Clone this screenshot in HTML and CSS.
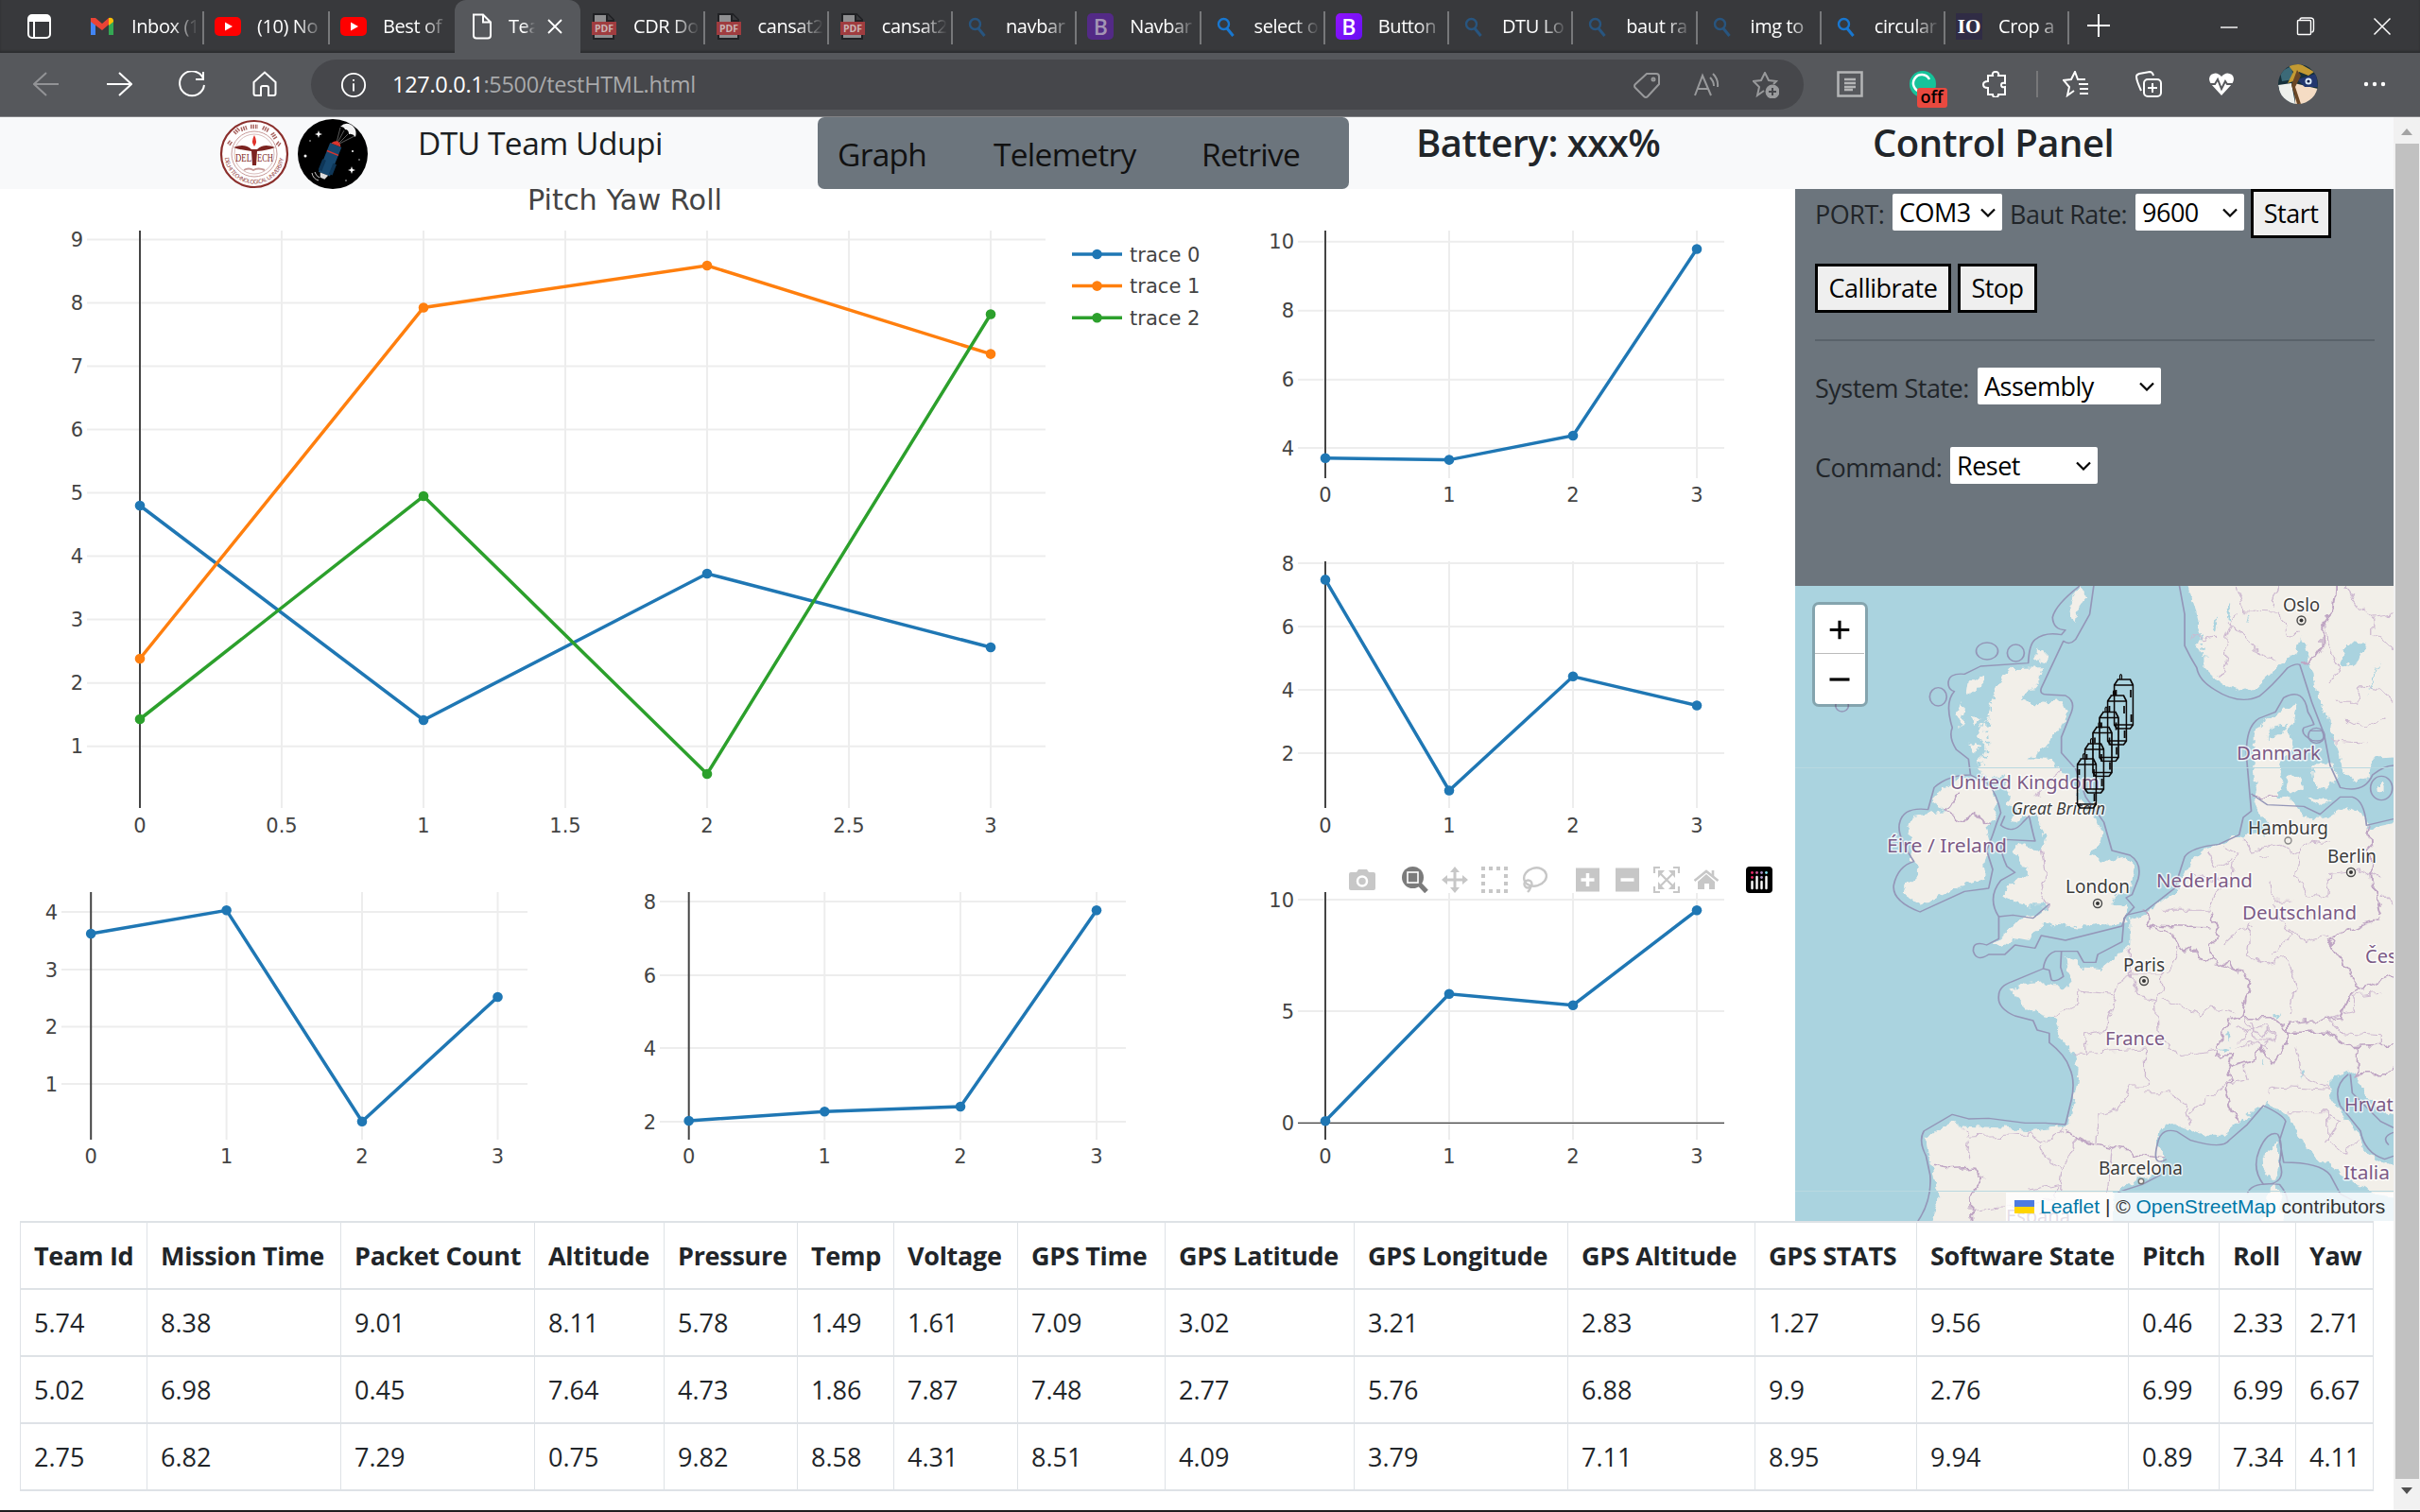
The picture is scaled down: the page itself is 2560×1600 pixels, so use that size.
FILE: index.html
```html
<!DOCTYPE html>
<html lang="en">
<head>
<meta charset="utf-8">
<title>Team Udupi</title>
<link rel="stylesheet" href="styles.css">
</head>
<body>
<svg class="defs" width="0" height="0">
  <defs>
    <symbol id="pdf" viewBox="0 0 28 28"><path d="M3 1h15l6 6v20H3z" fill="#8f8f91" stroke="#202124" stroke-width="2"/><path d="M17 1v7h7" fill="#3a3b3e" stroke="#202124" stroke-width="2"/><rect x="1" y="9" width="26" height="14" fill="#a03c3f"/><text x="14" y="20" font-size="10.5" font-weight="700" text-anchor="middle" fill="#c9b4b5">PDF</text></symbol>
    <symbol id="yt" viewBox="0 0 28 28"><rect x="0" y="4" width="28" height="20" rx="5" fill="#f00"/><path d="M11 9.500l8 4.500-8 4.500z" fill="#fff"/></symbol>
    <symbol id="search" viewBox="0 0 28 28"><circle cx="12.500" cy="11.500" r="5.500" fill="none" stroke="currentColor" stroke-width="2.400"/><path d="M16 16l6.500 8" stroke="currentColor" stroke-width="3"/></symbol>
    <symbol id="chev" viewBox="0 0 16 10"><path d="M1 1.500l7 7 7-7" fill="none" stroke="#000" stroke-width="2.200"/></symbol>
    <symbol id="can" viewBox="0 0 22 60"><g fill="none" stroke="#0c0808" stroke-width="1.700"><path d="M1 13v42l3 4h14l3-4V13l-3-6H5zM1 13h20M4 7h14M1 55h20M18.500 18v8M3 18v6M19 44v8"/><path d="M7 7V3q1-3 2 0v4" stroke-width="1.200"/></g></symbol>
  </defs>
</svg>

<header class="browser">
  <div class="tabstrip">
    <div class="tab-actions"><svg width="28" height="28" viewBox="0 0 28 28"><rect x="2" y="2" width="23" height="24" rx="4" fill="none" stroke="#fff" stroke-width="2"/><path d="M2 9V5q0-3 3-3h17q3 0 3 3v4z" fill="#fff"/><path d="M8 8v18" stroke="#fff" stroke-width="2"/></svg></div>
    <div class="tab"><svg class="fav" viewBox="0 0 28 28"><path d="M2 6v17h5V12z" fill="#4285f4"/><path d="M21 12v11h5V6z" fill="#34a853"/><path d="M2 5l5 0 7 6 7-6v7l-7 6-12-9z" fill="#ea4335"/><path d="M21 5q5-1 5 4l-5 4z" fill="#fbbc04"/></svg><span>Inbox (1</span></div>
    <div class="tab"><svg class="fav"><use href="#yt"/></svg><span>(10) No</span></div>
    <div class="tab nosep"><svg class="fav"><use href="#yt"/></svg><span>Best of</span></div>
    <div class="tab active"><svg class="fav" viewBox="0 0 28 28"><path d="M5 1.500h10l8 8v14q0 3-3 3H8q-3 0-3-3zM15 1.500v8h8" fill="none" stroke="#fff" stroke-width="2"/></svg><span>Tea</span><svg class="x" viewBox="0 0 16 16"><path d="M1 1l14 14M15 1L1 15" stroke="#fff" stroke-width="1.800"/></svg></div>
    <div class="tab"><svg class="fav"><use href="#pdf"/></svg><span>CDR Do</span></div>
    <div class="tab"><svg class="fav"><use href="#pdf"/></svg><span>cansat2</span></div>
    <div class="tab"><svg class="fav"><use href="#pdf"/></svg><span>cansat2</span></div>
    <div class="tab"><svg class="fav dim"><use href="#search"/></svg><span>navbar</span></div>
    <div class="tab"><b class="fav bs dimbs">B</b><span>Navbar</span></div>
    <div class="tab"><svg class="fav blue"><use href="#search"/></svg><span>select o</span></div>
    <div class="tab"><b class="fav bs">B</b><span>Button</span></div>
    <div class="tab"><svg class="fav dim"><use href="#search"/></svg><span>DTU Lo</span></div>
    <div class="tab"><svg class="fav dim"><use href="#search"/></svg><span>baut ra</span></div>
    <div class="tab"><svg class="fav dim"><use href="#search"/></svg><span>img to</span></div>
    <div class="tab"><svg class="fav blue"><use href="#search"/></svg><span>circular</span></div>
    <div class="tab"><b class="fav io">IO</b><span>Crop a</span></div>
    <div class="newtab"><svg width="26" height="26" viewBox="0 0 26 26"><path d="M13 1v24M1 13h24" stroke="#fff" stroke-width="2"/></svg></div>
    <div class="win"><svg width="20" height="20" viewBox="0 0 20 20"><path d="M1 11h18" stroke="#fff" stroke-width="1.400"/></svg><svg width="20" height="20" viewBox="0 0 20 20"><path d="M1.500 4.500q0-1 1-1h12q1 0 1 1v13q0 1-1 1h-12q-1 0-1-1zM4 3q0-2 2-2h9q3.500 0 3.500 3v9q0 3-2 3" fill="none" stroke="#fff" stroke-width="1.400"/></svg><svg width="20" height="20" viewBox="0 0 20 20"><path d="M1.500 1.500l17 17M18.500 1.500l-17 17" stroke="#fff" stroke-width="1.500"/></svg></div>
  </div>
  <div class="toolbar">
    <div class="cell first"><svg class="ic grey" viewBox="0 0 28 28"><path d="M27 14H1M14 2L1 14l13 12"/></svg></div>
    <div class="cell"><svg class="ic" viewBox="0 0 28 28"><path d="M1 14h26M14 2l13 12-13 12"/></svg></div>
    <div class="cell"><svg class="ic" viewBox="0 0 28 28"><path d="M26 8A13 13 0 1 0 27 15M26 1v8h-8"/></svg></div>
    <div class="cell"><svg class="ic" viewBox="0 0 28 28"><path d="M2.500 12L14 1.500 25.500 12v12q0 2-2 2H18v-8q0-2-2-2h-4q-2 0-2 2v8H4.500q-2 0-2-2z"/></svg></div>
    <div class="address">
      <svg class="ic" width="30" height="30" viewBox="0 0 30 30"><circle cx="15" cy="15" r="13"/><path d="M15 13v9M15 8.500v2"/></svg>
      <span class="url"><b>127.0.0.1</b>:5500/testHTML.html</span>
      <div class="acell"><svg class="ic lg" viewBox="0 0 28 28"><path d="M14 2h10q3 0 3 3v8L15 26q-2 2-4 0L2 17q-2-2 0-4z"/><circle cx="21" cy="8" r="1.500"/></svg></div>
      <div class="acell"><svg class="ic lg" viewBox="0 0 28 28"><path d="M2 25L10 4l9 21M5 18h11M18 6q4 4 4 9M21 2q6 6 5 14"/></svg></div>
      <div class="acell"><svg class="ic lg" viewBox="0 0 28 28"><path d="M12 20l-7 5 2-9-6-6 8-1 4-8 4 8 8 1-3 3"/><circle cx="21" cy="21" r="7.500" fill="#9a9b9d" stroke="none"/><path d="M21 17v8M17 21h8" stroke="#46474b"/></svg></div>
    </div>
    <div class="cell first"><svg class="ic pg" viewBox="0 0 28 28"><path d="M1.500 1.500h25v25h-25zM8 9h12M8 13h12M8 17h12M8 20h9" stroke-width="2.500"/></svg></div>
    <div class="cell gram"><svg width="28" height="28" viewBox="0 0 28 28"><circle cx="14" cy="14" r="14" fill="#15c39a"/><path d="M21 9A9 9 0 1 0 12 22" fill="none" stroke="#fff" stroke-width="2.500"/></svg><i>off</i></div>
    <div class="cell"><svg class="ic" viewBox="0 0 28 28"><path d="M6 5h5q-1-4 3-4t3 4h7v8q-4-1-4 2t4 2v8h-7q0 3-3 3t-3-3H6v-7q-5 0-5-3.500T6 11z"/></svg></div>
    <div class="vsep"></div>
    <div class="cell"><svg class="ic" viewBox="0 0 28 28"><path d="M12 21l-7 5 2-9-6-7 8-1 4-8 3 8 8 0M17 14h10M18 19h9M18 24h9"/></svg></div>
    <div class="cell"><svg class="ic" viewBox="0 0 28 28"><rect x="9" y="9" width="18" height="18" rx="4"/><path d="M18 13v10M13 18h10M6 21Q1 10 1 6q0-2 3-3l11-2q3 0 4 4"/></svg></div>
    <div class="cell"><svg class="ic" viewBox="0 0 28 28"><path d="M14 26L3 14Q-1 8 3 4q6-4 11 2 5-6 11-2 4 4 0 10z" fill="#fff" stroke="none"/><path d="M0 14h7l3-5 4 10 4-8 2 3h8" stroke="#56585c"/></svg></div>
    <div class="cell ava"><svg width="42" height="42" viewBox="0 0 42 42"><clipPath id="av"><circle cx="21" cy="21" r="21"/></clipPath><g clip-path="url(#av)"><path d="M0 0h42v42H0z" fill="#16303a"/><path d="M2 8l12-6 2 14-12 2z" fill="#3c6a78"/><path d="M0 22l14-2 4 22H4z" fill="#eef0ec"/><path d="M17 20l25 6v16H18z" fill="#f5dcc4"/><path d="M20 16l20-6 2 14-14 0z" fill="#23376f"/><path d="M10 0h14l14 8-6 4-10-4-6 10-6 2 6-12z" fill="#c39a33"/><path d="M20 6l4 6-6 12 6 18h-4l-6-20z" fill="#6b4725"/><circle cx="32" cy="18" r="3.500" fill="#dcebfa"/><circle cx="32" cy="18" r="1.600" fill="#111c44"/></g></svg></div>
    <div class="cell"><svg width="28" height="28" viewBox="0 0 28 28" fill="#fff"><circle cx="5" cy="14" r="2.200"/><circle cx="14" cy="14" r="2.200"/><circle cx="23" cy="14" r="2.200"/></svg></div>
  </div>
</header>

<div class="viewport">
<main class="page">
  <nav class="navbar">
    <svg class="logo1" width="74" height="74" viewBox="-37 -37 74 74"><circle r="35" fill="#fff" stroke="#8b2f2c" stroke-width="2.200"/><circle r="24" fill="none" stroke="#c79a98" stroke-width="1"/><circle r="21" fill="none" stroke="#d9bcbb" stroke-width="1"/><path id="arc2" d="M-31.500 0A31.500 31.500 0 0 0 31.500 0" fill="none"/><text font-size="6" fill="#8b2f2c"><textPath href="#arc2" startOffset="4" textLength="90">DELHI TECHNOLOGICAL UNIVERSITY</textPath></text><path d="M-27.500-13l4 3M-21-22l5-5M-14-26l6-2M-4-29h8M9-28l6 3M19-22l4 6M24-12l4 3" stroke="#a96460" stroke-width="4.500" stroke-dasharray="1.500 1"/><path d="M-22-7Q-10-12-3-5h6Q10-12 22-7 14-4 3-3L2 12h-4L-3-3Q-14-4-22-7z" fill="#7c2421"/><path d="M0-20q4 7 0 12-4-5 0-12z" fill="#e0322b"/><text x="-20" y="8" font-size="13" fill="#7c2421" class="serif" textLength="17" lengthAdjust="spacingAndGlyphs">DEL</text><text x="3" y="8" font-size="12" fill="#7c2421" class="serif" textLength="17" lengthAdjust="spacingAndGlyphs">ECH</text><path d="M-11 17q5-3 10 0 5-3 12 0" stroke="#c79a98" fill="none" stroke-width="2"/></svg>
    <svg class="logo2" width="74" height="74" viewBox="-37 -37 74 74"><circle r="37" fill="#000"/><path d="M8-29q6-6 13-1 5 5 3 12-3-4-7-3 0-5-4-5-1-3-5-3z" fill="#f2f2f2"/><path d="M8-28L4-12M12-25L5-12M16-21L6-11M23-19L7-11" stroke="#999" stroke-width=".6"/><g transform="rotate(22)"><rect x="-7" y="-10" width="13" height="33" fill="#17486f"/><path d="M-6-10q6-9 11 0z" fill="#d9352e"/><path d="M-7-1h13" stroke="#d9352e" stroke-width="1.500"/><path d="M-8 9h4v12h-4zM4 9h4v12H4z" fill="#0e3657"/><path d="M-5 23h9l-2 5h-5z" fill="#ddd"/></g><path d="M-22 20q1 6 7 8M-19 19q1 4 5 6" stroke="#ccc" fill="none"/><g fill="#fff"><path d="M-15-25l1 3 3 1-3 1-1 3-1-3-3-1 3-1z"/><path d="M20 13l1 3 3 1-3 1-1 3-1-3-3-1 3-1z"/><circle cx="-29" cy="2" r="1.500"/><circle cx="21" cy="-3" r="1"/><circle cx="-24" cy="-14" r=".7"/><circle cx="14" cy="28" r=".7"/><circle cx="28" cy="6" r=".7"/></g></svg>
    <span class="brand">DTU Team Udupi</span>
    <div class="btngroup"><span class="b1">Graph</span><span class="b2">Telemetry</span><span class="b3">Retrive</span></div>
    <h3 class="battery">Battery: xxx%</h3>
    <h3 class="cptitle">Control Panel</h3>
  </nav>

  <div class="main">
    <section class="charts">
      <svg class="chart big" data-chart="pyr" viewBox="0 200 1266 700"></svg>
      <svg class="chart" data-chart="r1" viewBox="1266 200 633 350"></svg>
      <svg class="chart" data-chart="r2" viewBox="1266 550 633 350"></svg>
      <div class="bottom">
        <svg class="chart" data-chart="b1" viewBox="0 900 633 392"></svg>
        <svg class="chart" data-chart="b2" viewBox="633 900 633 392"></svg>
        <div class="withbar">
          <svg class="chart" data-chart="b3" viewBox="1266 900 633 392"></svg>
          <div class="modebar">
            <svg viewBox="0 0 28 28"><path d="M2 6h6l2-3h9l2 3h5q2 0 2 2v15q0 2-2 2H2q-2 0-2-2V8q0-2 2-2z"/><circle cx="14" cy="15.500" r="5" fill="none" stroke="#fff" stroke-width="2.500"/></svg>
            <svg class="on g" viewBox="0 0 28 28"><circle cx="11.500" cy="11.500" r="11.500"/><path d="M18 18l8 8.500" stroke="#7b7b7b" stroke-width="5"/><rect x="6" y="6" width="11" height="11" fill="none" stroke="#fff" stroke-width="1.600"/></svg>
            <svg viewBox="0 0 28 28"><path d="M14 0l5 6h-3.500v6.500H22V9l6 5-6 5v-3.500h-6.500V22H19l-5 6-5-6h3.500v-6.500H6V19l-6-5 6-5v3.500h6.500V6H9z"/></svg>
            <svg viewBox="0 0 28 28"><path d="M0 2h28M0 26h28M2 0v28M26 0v28" stroke="#c7c7c7" stroke-width="4" stroke-dasharray="4 4"/></svg>
            <svg viewBox="0 0 28 28"><g fill="none" stroke="#c7c7c7" stroke-width="2.400"><ellipse cx="15" cy="11" rx="12" ry="9.500" transform="rotate(-15 15 11)"/><circle cx="7.500" cy="18.500" r="4"/><path d="M10 20q1 3-3 7"/></g></svg>
            <svg class="g" viewBox="0 0 28 28"><path d="M2 1.500h25v25H2z"/><path d="M14.500 7v14M7.500 14h14" stroke="#fff" stroke-width="3.500"/></svg>
            <svg viewBox="0 0 28 28"><path d="M2 1.500h25v25H2z"/><path d="M7.500 14h14" stroke="#fff" stroke-width="3.500"/></svg>
            <svg viewBox="0 0 28 28"><path d="M1 7V1h6M21 1h6v6M27 21v6h-6M7 27H1v-6M7 7l14 14M21 7L7 21" fill="none" stroke="#c7c7c7" stroke-width="2.200"/><path d="M5 4h7l-7 8zM23 4v8l-7-8zM5 24v-8l7 8zM23 24h-7l7-8z"/></svg>
            <svg viewBox="0 0 28 28"><path d="M14 8l9 8v8h-6v-6h-5v6H5v-8z"/><path d="M1.500 15L14 5l12.500 10M21 4v6" fill="none" stroke="#c7c7c7" stroke-width="2.600"/></svg>
            <svg class="g" viewBox="0 0 28 28"><rect width="28" height="28" rx="4" fill="#000"/><path d="M6.500 16v7M11.500 11v12M16.500 16v7M21.500 11v12" stroke="#fff" stroke-width="2.400" stroke-linecap="round"/><circle cx="6.500" cy="6.500" r="1.400" fill="#ee2a68"/><circle cx="11.500" cy="6.500" r="1.400" fill="#d05a9a"/><circle cx="16.500" cy="6.500" r="1.400" fill="#a992c8"/><circle cx="21.500" cy="6.500" r="1.400" fill="#7fe0f0"/><circle cx="6.500" cy="11.500" r="1.400" fill="#ee2a68"/><circle cx="16.500" cy="11.500" r="1.400" fill="#b79fd0"/></svg>
          </div>
        </div>
      </div>
    </section>

    <aside class="side">
      <div class="controls">
        <div class="crow r1"><label class="l1">PORT:</label><div class="sel s1">COM3<svg><use href="#chev"/></svg></div><label class="l2">Baut Rate:</label><div class="sel s2">9600<svg><use href="#chev"/></svg></div><button class="k1">Start</button></div>
        <div class="crow r2"><button class="k2">Callibrate</button><button class="k3">Stop</button></div>
        <div class="rule"></div>
        <div class="crow r3"><label class="l3">System State:</label><div class="sel s3">Assembly<svg><use href="#chev"/></svg></div></div>
        <div class="crow r4"><label class="l4">Command:</label><div class="sel s4">Reset<svg><use href="#chev"/></svg></div></div>
      </div>
      <div class="map">
        <svg class="tiles" width="633" height="672" viewBox="0 0 633 672">
          <defs><filter id="coast" x="-5%" y="-5%" width="110%" height="110%" color-interpolation-filters="sRGB"><feTurbulence type="fractalNoise" baseFrequency=".1" numOctaves="3" seed="4"/><feDisplacementMap in="SourceGraphic" scale="11" xChannelSelector="R" yChannelSelector="G"/></filter><filter id="line" x="-5%" y="-5%" width="110%" height="110%" color-interpolation-filters="sRGB"><feTurbulence type="fractalNoise" baseFrequency=".09" numOctaves="2" seed="8"/><feDisplacementMap in="SourceGraphic" scale="12" xChannelSelector="R" yChannelSelector="G"/></filter></defs>
          <rect width="633" height="672" fill="#aad3df"/>
          <g filter="url(#coast)"><g transform="scale(.42742 .33333) translate(-21 -30)" fill="#f2efe9">
            <path d="M545 295L632 292L628 325L580 395L600 405L680 396L692 430L675 490L640 545L600 580L650 585L690 620L715 680L735 720L765 770L780 820L775 850L750 880L790 905L840 893L857 930L850 985L820 1010L800 1035L845 1045L840 1090L820 1105L770 1100L720 1115L660 1100L615 1120L600 1155L560 1145L530 1180L510 1165L545 1130L580 1085L620 1075L650 1045L600 1045L560 1035L530 1010L565 970L600 940L560 880L580 850L630 870L640 830L625 780L610 755L555 780L570 730L545 720L550 670L535 630L500 650L475 610L490 540L475 500L490 460L505 400L520 350Z"/>
            <path d="M485 310L490 330L465 365L445 380L450 340ZM432 400L442 420L430 480L425 440ZM455 440L485 450L470 475ZM450 530L480 540L460 560ZM620 225L640 240L640 275L618 265ZM730 35L740 70L718 110L712 145L700 100L715 60Z"/>
            <path d="M385 675L440 640L500 660L522 720L515 770L490 800L500 850L490 910L490 960L440 980L390 1010L330 1040L290 1010L300 975L330 940L305 900L320 860L300 820L310 765L360 750L395 745L360 710Z"/>
            <path d="M985 0L1010 100L1020 150L1015 230L1035 250L1035 290L1075 340L1130 365L1165 350L1210 290L1265 240L1275 190L1290 250L1300 300L1310 370L1330 430L1345 480L1370 560L1375 620L1400 650L1440 640L1450 575L1530 570L1530 0Z"/>
            <path d="M1265 395L1255 470L1240 490L1258 520L1240 560L1220 600L1225 640L1215 700L1250 710L1290 770L1330 770L1380 730L1430 760L1440 800L1530 775L1530 1720L1480 1700L1440 1650L1410 1600L1400 1570L1350 1590L1345 1650L1370 1700L1410 1760L1430 1820L1460 1850L1530 1890L1530 1975L1450 1960L1390 1910L1330 1860L1290 1820L1260 1760L1240 1710L1190 1670L1160 1690L1120 1730L1080 1775L1040 1775L990 1750L960 1735L925 1760L920 1800L935 1850L910 1895L850 1925L810 1960L800 2070L350 2070L375 1980L360 1870L350 1830L345 1790L370 1760L415 1730L440 1745L530 1750L600 1758L680 1745L700 1735L720 1600L722 1560L712 1510L680 1480L665 1405L600 1375L570 1340L555 1310L600 1290L640 1285L660 1300L705 1300L690 1210L715 1215L725 1240L775 1245L830 1190L850 1170L850 1090L890 1070L930 1030L960 1000L990 930L1000 900L1030 870L1070 850L1110 825L1160 820L1185 830L1190 780L1165 745L1155 700L1165 660L1155 600L1155 500L1180 460L1225 430Z"/>
            <path d="M1235 640L1270 630L1275 670L1250 690ZM1300 600L1350 590L1365 630L1340 680L1310 670ZM1290 700L1350 705L1320 730ZM1460 660L1480 660L1480 685L1462 680ZM1215 1790L1222 1860L1205 1925L1180 1880L1178 1835L1200 1815ZM1190 1960L1215 1930L1230 2070L1180 2070ZM1440 1600l15 10 10 40 20 30-20-5-20-40z"/>
            <path fill="#aad3df" d="M1390 210L1430 215L1420 260L1385 290L1365 275ZM1470 270L1440 375L1450 320ZM1200 480L1240 470L1225 500L1190 510ZM1065 1505l20-8 15 4-20 10zM1090 1450l8 2-4 20zM1200 1385l22 15-8 4zM1175 1530l6 20-6 0zM1268 1570l6-10 2 30zM1055 160l6-30 4 30-4 25zM1090 130l4-50 6 10-6 50zM1140 150l4-30 4 10z"/>
            <path d="M985 30L1010 130L1030 230" fill="none" stroke="#aad3df" stroke-width="8" stroke-dasharray="14 9 4 6"/><path d="M482 600L498 530L492 470L515 380" fill="none" stroke="#aad3df" stroke-width="7" stroke-dasharray="12 14 5 12"/>
          </g></g>
          <g filter="url(#line)"><g transform="scale(.42742 .33333) translate(-21 -30)" fill="none" stroke="#cdb8d0" stroke-width="3">
            <path d="M1060 190L1030 200L1000 190M1110 30L1130 110L1220 115L1240 190L1265 180M1110 115L1085 190L1090 260L1075 330M1090 140L1180 250L1210 270M1220 30L1200 90M1380 30L1420 100L1450 130L1502 120M1450 130L1450 180L1502 230M1330 150L1340 220L1370 300L1340 340M1360 400L1410 400L1420 350L1470 360L1502 400M1380 460L1440 480L1480 440M1340 520L1440 530"/>
            <path d="M680 600L640 680L610 700M630 860L640 960L630 1000L650 1060M1040 870L1060 920L1100 900M990 940L1080 970M930 1060L1040 1060L1060 1010L1100 960L1110 880L1080 860M1170 880L1190 890M1130 830L1150 870L1220 850L1270 880L1300 840L1340 850M1200 970L1205 1030L1250 1030M1270 880L1260 950L1290 1010L1340 1020L1345 940L1420 930L1470 960M1470 1000L1502 1040M1200 1040L1250 1140L1200 1200M1150 1100L1140 1200L1180 1230L1240 1210L1260 1300L1245 1380M1245 1120L1280 1160L1340 1140M1080 1170L1120 1120L1160 1110"/>
            <path d="M850 1180L850 1270L870 1330L910 1340L930 1310L930 1260L850 1260M940 1260L970 1190L970 1160M720 1310L720 1360L660 1400M720 1310L810 1325L820 1290L850 1270M810 1325L790 1440L735 1455L740 1510L712 1510M910 1340L915 1440L950 1500L980 1520L1060 1500M740 1510L890 1500L890 1620L850 1620L820 1690L770 1710L765 1800M880 1640L950 1640L990 1680L1000 1750M930 1340L1020 1395L1050 1365L1110 1380M1000 1700L1080 1620L1100 1590M440 1750L445 1780L600 1770L640 1800L690 1750M450 1790L445 1850M630 1800L640 1850L680 1880M720 1780L685 1880L680 1950M600 1950L680 1930L650 1980L540 2000M810 1810L790 1950M460 2010L540 2000"/>
            <path d="M1340 1400L1370 1450L1470 1460L1470 1490M1340 1400L1410 1380L1400 1330L1470 1320M1260 1490L1270 1560L1290 1600L1345 1630M1190 1640L1210 1620L1340 1630M1240 1700L1340 1700L1340 1790L1380 1830L1420 1790M1340 1700L1370 1730L1330 1800M1130 1550L1140 1600L1100 1610M1120 1480l30-40 30 20 10-30 20 40-30 10M1130 1400l20 40 40-20 20 40-30 30M1110 1430l40 20M1110 1500l50-20 30 20M1150 1410l10 60 40 0"/>
          </g></g>
          <g filter="url(#line)"><g transform="scale(.42742 .33333) translate(-21 -30)" fill="none" stroke="#bea4c3" stroke-width="4.600">
            <path d="M1360 30L1355 100L1325 160L1325 220L1305 260L1270 280M430 680L395 745L440 780L460 750L500 790M885 1060L900 1110L940 1130L970 1155L985 1190L1000 1170L1020 1210L1050 1220L1080 1235L1150 1275L1125 1400L1200 1400L1225 1420L1240 1450L1340 1450M1050 1220L1045 1170L1070 1150L1050 1060M900 1110L1040 1115M1080 1235L1100 1220L1110 1250M1125 1400L1095 1410L1060 1520L1100 1520L1095 1560L1160 1530L1170 1490L1200 1550L1240 1480L1240 1420M1095 1560L1105 1600L1085 1620L1100 1690L1125 1740M1240 1420L1370 1400L1390 1330L1420 1310L1340 1150L1430 1100L1470 1090M1340 1450L1380 1490L1502 1485M1410 1490L1410 1580L1480 1580L1502 1560M1420 1310L1502 1270M1155 700L1215 700M1440 790L1450 960L1470 1080M690 1760L750 1800L800 1815L850 1820L860 1840L940 1850M360 1870L400 1880L470 1875L485 1910L455 1960L460 2046"/>
          </g></g>
          <g transform="scale(.42742 .33333) translate(-21 -30)" fill="none" stroke="#9496b8" stroke-width="4" stroke-linejoin="round">
            <path d="M760 30L750 120L715 200Q700 220 685 205L630 355Q625 375 645 375L690 378Q715 395 705 430L680 510V560L715 610L740 700L785 780L805 870L850 885Q880 910 870 960L855 1010L840 1020L860 1050L835 1085L830 1160L770 1200L765 1225H735L720 1190H665Q640 1200 635 1245L560 1285Q525 1300 525 1330Q520 1370 565 1395L610 1410L620 1440L650 1450V1480Q690 1520 700 1560Q715 1600 705 1660L690 1740L640 1735L590 1735L500 1720L450 1722L410 1708L340 1760Q325 1790 345 1840L355 1900Q360 1980 325 2046"/>
            <path d="M725 30Q665 90 658 130Q660 170 690 170L680 185Q640 175 615 200Q600 215 598 275L480 285L440 310Q400 305 400 340Q400 360 415 365Q390 400 410 480Q400 510 420 550L450 580L455 630L500 660Q520 690 530 750Q520 780 510 820L495 870L510 930L500 990L440 1000L330 1065Q260 1030 265 980Q275 920 315 905Q270 820 280 780Q290 730 350 740L365 670Q400 630 455 630M540 760L530 790Q560 820 585 780L600 760Q610 820 615 840L540 835Q520 850 545 920L565 940L530 965Q495 1020 525 1080V1150L495 1170Q460 1155 462 1190Q470 1225 500 1200L540 1200L565 1170L615 1180L630 1140L690 1155L830 1110L840 1075L890 1060L960 990L985 890Q1000 860 1070 850L1120 820L1130 765L1150 745L1140 600Q1130 480 1170 450L1210 430L1230 385Q1280 350 1290 430Q1300 450 1305 470L1280 480Q1270 500 1300 520Q1340 530 1325 490L1295 490"/>
            <path d="M972 30L985 120L985 220Q1000 260 1015 290Q1020 330 1060 360Q1120 410 1170 380Q1200 350 1240 290Q1260 275 1270 280L1300 400L1330 500L1345 600L1370 670Q1430 690 1450 630Q1480 600 1502 600M1150 690L1190 725L1280 730L1320 755L1370 700L1400 700Q1430 710 1435 790L1502 770M525 1080L560 1075L610 1085L650 1040"/>
            <circle cx="496" cy="237" r="27"/><ellipse cx="567" cy="243" rx="21" ry="27"/><ellipse cx="375" cy="382" rx="21" ry="29"/><ellipse cx="137" cy="410" rx="16" ry="19"/><ellipse cx="1311" cy="505" rx="20" ry="24"/><ellipse cx="1472" cy="672" rx="27" ry="38"/><path d="M680 1190L678 1240L685 1270Q665 1290 655 1280L650 1250L635 1245"/>
            <path d="M940 1850Q900 1880 920 1790Q930 1750 965 1762L1000 1790Q1080 1820 1095 1790L1140 1740L1180 1680Q1230 1710 1235 1730L1220 1790L1230 1860Q1320 1860 1345 1900L1370 1960L1400 1980M1215 1770Q1190 1760 1170 1820Q1150 1880 1180 1930Q1240 1930 1220 1860Q1230 1800 1215 1770M1140 1960Q1150 1920 1220 1930Q1240 1960 1240 1990M1390 1580Q1350 1620 1370 1680L1420 1760Q1430 1830 1480 1850L1502 1840M1395 1580L1400 1640L1470 1730L1502 1750M1502 1765Q1470 1780 1490 1805M820 1955L880 1930L925 1900"/>
          </g>
          <path d="M0 192.500h633M0 640.500h633" stroke="#b9d8e0" stroke-width="1"/>
          <g class="labels">
            <g class="country">
              <text x="467" y="184" textLength="89" lengthAdjust="spacingAndGlyphs">Danmark</text><text x="164" y="215" textLength="158" lengthAdjust="spacingAndGlyphs">United Kingdom</text><text x="97" y="282" textLength="127" lengthAdjust="spacingAndGlyphs">Éire / Ireland</text><text x="382" y="319" textLength="102" lengthAdjust="spacingAndGlyphs">Nederland</text><text x="473" y="353" textLength="121" lengthAdjust="spacingAndGlyphs">Deutschland</text><text x="603" y="399">Čes</text><text x="328" y="486" textLength="63" lengthAdjust="spacingAndGlyphs">France</text><text x="581" y="556">Hrvat</text><text x="580" y="628" textLength="49" lengthAdjust="spacingAndGlyphs">Italia</text><text x="223" y="674" textLength="68" lengthAdjust="spacingAndGlyphs">España</text>
            </g>
            <g class="city">
              <text x="516" y="27" textLength="39" lengthAdjust="spacingAndGlyphs">Oslo</text><text x="479" y="263" textLength="85" lengthAdjust="spacingAndGlyphs">Hamburg</text><text x="563" y="293" textLength="52" lengthAdjust="spacingAndGlyphs">Berlin</text><text x="286" y="325" textLength="68" lengthAdjust="spacingAndGlyphs">London</text><text x="347" y="408" textLength="44" lengthAdjust="spacingAndGlyphs">Paris</text><text x="321" y="623" textLength="89" lengthAdjust="spacingAndGlyphs">Barcelona</text>
              <text x="229" y="242" textLength="99" lengthAdjust="spacingAndGlyphs" class="isl">Great Britain</text>
            </g>
            <g fill="#f2efe9" stroke="#4a4a4a" stroke-width="1.400"><circle cx="535.500" cy="36.500" r="4.500"/><circle cx="320" cy="336" r="4.500"/><circle cx="369" cy="418" r="4.500"/><circle cx="588" cy="303" r="4.500"/><circle cx="521.500" cy="269.500" r="3.500" stroke="#888"/><circle cx="366" cy="630" r="2.800" stroke="#777"/></g>
            <g fill="#333"><circle cx="535.500" cy="36.500" r="2"/><circle cx="320" cy="336" r="2"/><circle cx="369" cy="418" r="2"/><circle cx="588" cy="303" r="2"/></g>
          </g>
          <g><use href="#can" x="336.500" y="92" width="22" height="60"/><use href="#can" x="329.500" y="109" width="22" height="60"/><use href="#can" x="321" y="126.500" width="22" height="60"/><use href="#can" x="314" y="142.500" width="22" height="60"/><use href="#can" x="305.500" y="160" width="22" height="60"/><use href="#can" x="297.500" y="176" width="22" height="60"/></g>
        </svg>
        <div class="zoomctl"><svg viewBox="0 0 52 52"><path d="M26 17v20M15.500 27h21" stroke="#000" stroke-width="3.200"/></svg><svg viewBox="0 0 52 52"><path d="M15.500 27h21" stroke="#000" stroke-width="3.200"/></svg></div>
        <div class="attrib"><svg width="21" height="14" viewBox="0 0 21 14"><path d="M0 0h21v7H0z" fill="#4c7be1"/><path d="M0 7h21v7H0z" fill="#ffd500"/></svg><a>Leaflet</a> | © <a>OpenStreetMap</a> contributors</div>
      </div>
    </aside>
  </div>

  <table class="data">
    <colgroup><col class="c134"><col class="c205"><col class="c205"><col class="c137"><col class="c141"><col class="c102"><col class="c131"><col class="c156"><col class="c200"><col class="c226"><col class="c198"><col class="c171"><col class="c224"><col class="c96"><col class="c81"><col class="c82"></colgroup>
    <tr><th>Team Id</th><th>Mission Time</th><th>Packet Count</th><th>Altitude</th><th>Pressure</th><th>Temp</th><th>Voltage</th><th>GPS Time</th><th>GPS Latitude</th><th>GPS Longitude</th><th>GPS Altitude</th><th>GPS STATS</th><th>Software State</th><th>Pitch</th><th>Roll</th><th>Yaw</th></tr>
    <tr><td>5.74</td><td>8.38</td><td>9.01</td><td>8.11</td><td>5.78</td><td>1.49</td><td>1.61</td><td>7.09</td><td>3.02</td><td>3.21</td><td>2.83</td><td>1.27</td><td>9.56</td><td>0.46</td><td>2.33</td><td>2.71</td></tr>
    <tr><td>5.02</td><td>6.98</td><td>0.45</td><td>7.64</td><td>4.73</td><td>1.86</td><td>7.87</td><td>7.48</td><td>2.77</td><td>5.76</td><td>6.88</td><td>9.9</td><td>2.76</td><td>6.99</td><td>6.99</td><td>6.67</td></tr>
    <tr><td>2.75</td><td>6.82</td><td>7.29</td><td>0.75</td><td>9.82</td><td>8.58</td><td>4.31</td><td>8.51</td><td>4.09</td><td>3.79</td><td>7.11</td><td>8.95</td><td>9.94</td><td>0.89</td><td>7.34</td><td>4.11</td></tr>
  </table>
</main>
<div class="scrollbar"><svg width="12" height="7" viewBox="0 0 12 7"><path d="M0 7l6-7 6 7z" fill="#a3a3a3"/></svg><div class="thumb"></div><svg width="12" height="7" viewBox="0 0 12 7"><path d="M0 0l6 7 6-7z" fill="#505050"/></svg></div>
</div>
<script src="charts.js"></script>
</body>
</html>
```
FILE: styles.css
```css
* { box-sizing: border-box; }
body { margin: 0; width: 2560px; height: 1600px; overflow: hidden; background: #1f1f21; font-family: "Open Sans", "Noto Sans", sans-serif; color: #212529; }
.defs { position: absolute; }
svg { display: block; flex: none; }
.serif { font-family: "Liberation Serif", serif; }

.tabstrip { height: 56px; background: #38393c; display: flex; box-shadow: inset 0 -2px 2px #2c2d30; }
.tab-actions { width: 83px; padding: 14px 0 0 28px; }
.tab { width: 131.25px; height: 56px; display: flex; align-items: center; padding: 0 6px 0 11px; color: #fff; font-size: 20px; background: linear-gradient(#77787a, #77787a) right 12px / 2px 35px no-repeat; background-position: right 0 top 12px; }
.tab:nth-child(2), .tab:nth-child(3), .tab:nth-child(4) { width: 133px; }
.tab.nosep { background: none; width: 132px; }
.tab.active { width: 133px; background: #56585c; border-radius: 12px 12px 0 0; padding-left: 15px; }
.tab.active + .tab { width: 131.5px; }
.tab .fav { width: 28px; height: 28px; flex: none; }
.tab span { margin-left: 17px; flex: 1; white-space: nowrap; overflow: hidden; letter-spacing: -.4px; -webkit-mask-image: linear-gradient(90deg, #000 60%, transparent); mask-image: linear-gradient(90deg, #000 60%, transparent); position: relative; top: -1px; }
.tab.active span { margin-left: 14px; flex: 0 0 28px; }
.tab .x { width: 16px; height: 16px; margin-left: 13px; }
.fav.dim { color: #28557f; }
.fav.blue { color: #1877d0; }
.bs { background: linear-gradient(135deg, #9013fe, #6610f2); border-radius: 5px; font-size: 23px; line-height: 28px; text-align: center; font-weight: 600; color: #fff; }
.bs.dimbs { background: #532a86; color: #a394b4; }
.io { background: #302c45; font: 700 21px/28px "Liberation Serif", serif; text-align: center; }
.newtab { width: 60px; padding: 14px 0 0 18px; }
.win { display: flex; gap: 61px; margin-left: 99px; align-items: center; }
.toolbar { height: 68px; background: #56585c; border-bottom: 1px solid #828386; display: flex; align-items: center; padding-bottom: 1px; }
.cell { width: 77px; height: 100%; display: flex; align-items: center; justify-content: center; }
.cell.first { margin-left: 10.5px; }
.cell.ava { width: 85px; }
.ic { width: 28px; height: 28px; fill: none; stroke: #fff; stroke-width: 2; }
.ic.grey { stroke: #929396; }
.ic.lg { stroke: #98999b; }
.ic.pg { stroke: #b4b5b6; }
.vsep { width: 8px; height: 28px; background: linear-gradient(#77787a, #77787a) 4px 0 / 2px 28px no-repeat; }
.address { margin-left: 10.5px; width: 1579px; height: 53px; margin-top: 1px; border-radius: 27px; background: #46474b; display: flex; align-items: center; padding: 0 9px 0 31px; }
.url { margin-left: 27px; flex: 1; font-size: 23.500px; color: #a9aaac; letter-spacing: -.3px; position: relative; top: -1px; }
.url b { color: #fff; font-weight: 400; }
.acell { width: 63px; display: flex; justify-content: center; }
.gram { position: relative; }
.gram i { position: absolute; left: 32px; top: 37px; width: 32px; height: 21px; border-radius: 3px; background: #e9493f; color: #000; font: 600 18px/19px "Open Sans", sans-serif; text-align: center; }

.viewport { height: 1474px; display: flex; background: #fff; }
.page { width: 2532px; }
.navbar { height: 76px; background: #f8f9fa; display: flex; align-items: flex-start; white-space: nowrap; }
.logo1 { margin: 2px 0 0 232px; }
.logo2 { margin: 2px 0 0 9px; }
.brand { margin-left: 53px; width: 423px; font-size: 33.500px; line-height: 54px; color: #1b1f22; letter-spacing: -.5px; }
.btngroup { width: 562px; height: 76px; background: #6c757d; border-radius: 7px; display: flex; font-size: 33.500px; line-height: 78px; color: #111; padding-left: 21px; letter-spacing: -.7px; }
.b1 { width: 165px; }
.b2 { width: 220px; }
h3 { margin: 0; font-size: 40px; line-height: 54px; font-weight: 600; letter-spacing: -.5px; }
.battery { margin-left: 71px; width: 483px; }
.main { display: flex; height: 1092px; }
.charts { width: 1899px; display: grid; grid-template: 350px 350px 392px / 1266px 633px; }
.chart { width: 100%; height: 100%; overflow: visible; font-family: Verdana, "DejaVu Sans", sans-serif; font-size: 21px; fill: #444; }
.big { grid-row: 1 / 3; }
.bottom { grid-column: 1 / 3; display: grid; grid-template-columns: repeat(3, 633px); }
.withbar { position: relative; height: 392px; }
.modebar { position: absolute; top: 17px; right: 24px; display: flex; gap: 14px; background: #fff; }
.modebar svg { width: 28px; height: 28px; fill: #c7c7c7; }
.modebar .g { margin-left: 14px; }
.modebar svg.on { fill: #7b7b7b; }

.side { width: 633px; }
.controls { height: 420px; background: #6c757d; padding: 0 20px 0 21px; font-size: 27px; }
.crow { display: flex; align-items: flex-start; white-space: nowrap; letter-spacing: -.5px; }
.crow label { line-height: 54px; }
.sel { background: #fff; color: #000; height: 39px; line-height: 41px; border-radius: 2px; padding: 0 7px 0 7px; margin-top: 5px; display: flex; align-items: center; justify-content: space-between; }
.sel svg { width: 16px; height: 10px; }
button { height: 52px; border: 3.500px solid #000; background: #efefef; color: #000; font: 27px/44px "Open Sans", sans-serif; letter-spacing: -.5px; padding: 0; }
.l1 { width: 82px; }
.s1 { width: 116px; }
.l2 { width: 133px; margin-left: 8px; }
.s2 { width: 115px; margin-right: 7px; }
.k1 { width: 85px; }
.k2 { width: 144px; margin-right: 7px; }
.k3 { width: 84px; }
.r2 { margin-top: 25px; }
.rule { height: 2px; margin-top: 28px; background: #59626a; }
.r3 { margin-top: 23px; }
.r4 { margin-top: 30px; }
.l3 { width: 172px; }
.s3 { width: 194px; }
.l4 { width: 143px; }
.s4 { width: 156px; }

.map { position: relative; height: 672px; overflow: hidden; }
.labels { font-family: "Noto Sans", sans-serif; font-size: 20px; }
.labels text { paint-order: stroke; stroke: rgba(255, 255, 255, .75); stroke-width: 3px; stroke-linejoin: round; }
.country { fill: #7c5a86; }
.city { fill: #3c3c3c; }
.isl { font-style: italic; font-size: 18px; }
.zoomctl { position: absolute; left: 18px; top: 17px; width: 59px; height: 111px; border: 3.500px solid rgba(0, 0, 0, .22); border-radius: 7px; background: #fff; background-clip: padding-box; }
.zoomctl svg { height: 52px; width: 52px; }
.zoomctl svg:first-child { border-bottom: 1px solid #bbb; }
.attrib { position: absolute; right: 0; bottom: 0; width: 410px; height: 30px; padding-left: 9px; background: rgba(255, 255, 255, .8); font: 21px/29px "Liberation Sans", Arial, sans-serif; color: #333; white-space: nowrap; }
.attrib svg { display: inline-block; margin-right: 6px; }
.attrib a { color: #0078a8; }

.data { margin-left: 21px; width: 2490px; table-layout: fixed; border-collapse: collapse; font-size: 27px; white-space: nowrap; }
.data th, .data td { height: 71px; border: 2px solid #dee2e6; border-width: 2px 1px; padding: 0 0 0 14px; text-align: left; line-height: 36px; }
.data th { letter-spacing: -.3px; }
.c134 { width: 134px; } .c205 { width: 205px; } .c137 { width: 137px; } .c141 { width: 141px; }
.c102 { width: 102px; } .c131 { width: 131px; } .c156 { width: 156px; } .c200 { width: 200px; }
.c226 { width: 226px; } .c198 { width: 198px; } .c171 { width: 171px; } .c224 { width: 224px; }
.c96 { width: 96px; } .c81 { width: 81px; } .c82 { width: 82px; }

.scrollbar { width: 28px; background: #f1f1f1; display: flex; flex-direction: column; align-items: center; padding: 12px 0 17px; justify-content: space-between; }
.thumb { width: 25px; height: 1413px; background: #c1c1c1; }
```
FILE: charts.js
```js
// Line charts: axes ticks map a label to its position; points are [x, y] positions.
var BLUE = '#1f77b4', ORANGE = '#ff7f0e', GREEN = '#2ca02c';
var charts = {
  pyr: {
    title: 'Pitch Yaw Roll', box: [92, 244, 1106, 855], baseline: 881,
    x: [['0', 148], ['0.5', 298], ['1', 448], ['1.5', 598], ['2', 748], ['2.5', 898], ['3', 1048]],
    y: [['9', 253.4], ['8', 320.4], ['7', 387.5], ['6', 454.5], ['5', 521.5], ['4', 588.6], ['3', 655.6], ['2', 722.7], ['1', 789.7]],
    lines: [
      [BLUE, [[148, 535], [448, 762], [748, 607], [1048, 685]]],
      [ORANGE, [[148, 697], [448, 325.5], [748, 281], [1048, 374.6]]],
      [GREEN, [[148, 761], [448, 525], [748, 819], [1048, 332.5]]]
    ],
    legend: true
  },
  r1: { box: [1373, 244, 1824, 506], baseline: 531,
    x: [['0', 1402], ['1', 1533], ['2', 1664], ['3', 1795]],
    y: [['10', 255.7], ['8', 328.7], ['6', 401.7], ['4', 474]],
    lines: [[BLUE, [[1402, 484.8], [1533, 486.6], [1664, 461], [1795, 263.5]]]] },
  r2: { box: [1373, 594, 1824, 855], baseline: 881,
    x: [['0', 1402], ['1', 1533], ['2', 1664], ['3', 1795]],
    y: [['8', 596], ['6', 663], ['4', 730], ['2', 797]],
    lines: [[BLUE, [[1402, 613.4], [1533, 836.5], [1664, 715.8], [1795, 746.5]]]] },
  b1: { box: [65, 944, 558, 1206], baseline: 1231,
    x: [['0', 96.2], ['1', 239.6], ['2', 383], ['3', 526.5]],
    y: [['4', 965], ['3', 1026], ['2', 1086.5], ['1', 1147]],
    lines: [[BLUE, [[96.2, 988], [239.6, 963.3], [383, 1186.7], [526.5, 1055]]]] },
  b2: { box: [698, 944, 1191, 1206], baseline: 1231,
    x: [['0', 728.7], ['1', 872.3], ['2', 1016], ['3', 1160]],
    y: [['8', 954], ['6', 1032], ['4', 1109], ['2', 1187]],
    lines: [[BLUE, [[728.7, 1186], [872.3, 1176.3], [1016, 1171], [1160, 963.3]]]] },
  b3: { box: [1373, 944, 1824, 1206], baseline: 1231,
    x: [['0', 1402], ['1', 1533], ['2', 1664], ['3', 1795]],
    y: [['10', 952], ['5', 1070], ['0', 1188.3]], zeroY: 1188.3,
    lines: [[BLUE, [[1402, 1186.3], [1533, 1051.7], [1664, 1063.7], [1795, 963.3]]]] }
};

function seg(x1, y1, x2, y2, color, w) {
  return '<path d="M' + x1 + ' ' + y1 + 'L' + x2 + ' ' + y2 + '" stroke="' + color + '" stroke-width="' + w + '"/>';
}

document.querySelectorAll('[data-chart]').forEach(function (el) {
  var c = charts[el.dataset.chart], b = c.box, out = '';
  c.y.forEach(function (t) {
    out += seg(b[0], t[1], b[2], t[1], '#ededed', 2);
    out += '<text text-anchor="end" x="' + (b[0] - 4) + '" y="' + (t[1] + 7.5) + '">' + t[0] + '</text>';
  });
  c.x.forEach(function (t, i) {
    if (i) out += seg(t[1], b[1], t[1], b[3], '#ededed', 2);
    out += '<text text-anchor="middle" x="' + t[1] + '" y="' + c.baseline + '">' + t[0] + '</text>';
  });
  if (c.zeroY) out += seg(b[0], c.zeroY, b[2], c.zeroY, '#444', 1.3);
  out += seg(c.x[0][1], b[1], c.x[0][1], b[3], '#444', 2);
  c.lines.forEach(function (l) {
    out += '<polyline fill="none" stroke-width="3.5" stroke="' + l[0] + '" points="' + l[1].join(' ') + '"/>';
    l[1].forEach(function (p) { out += '<circle r="5.3" fill="' + l[0] + '" cx="' + p[0] + '" cy="' + p[1] + '"/>'; });
  });
  if (c.title) out += '<text font-size="29.75" x="558" y="222" textLength="206" lengthAdjust="spacingAndGlyphs">' + c.title + '</text>';
  if (c.legend) c.lines.forEach(function (l, i) {
    var y = 269 + i * 33.6;
    out += seg(1134, y, 1187, y, l[0], 3.5) + '<circle r="5.3" cx="1160.500" cy="' + y + '" fill="' + l[0] + '"/>';
    out += '<text x="1195" y="' + (y + 7.5) + '" textLength="74.5" lengthAdjust="spacingAndGlyphs">trace ' + i + '</text>';
  });
  el.innerHTML = out;
});
```
